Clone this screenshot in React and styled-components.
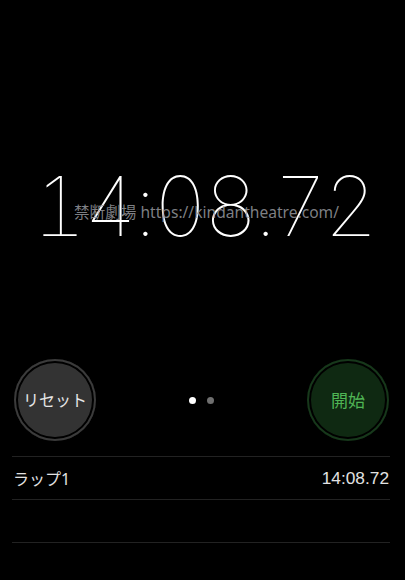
import React from "react";
import styled, { createGlobalStyle } from "styled-components";

const Global = createGlobalStyle`
  html, body {
    margin: 0;
    padding: 0;
    background: #000;
  }
  body {
    font-family: "Noto Sans", "Noto Sans CJK JP", sans-serif;
    color: #fff;
  }
`;

const Screen = styled.div`
  width: 405px;
  height: 580px;
  background: #000;
  display: flex;
  flex-direction: column;
  overflow: hidden;
`;

const Display = styled.div`
  position: relative;
  height: 359px;
  display: flex;
  align-items: center;
  justify-content: center;
  padding-top: 54px;
  padding-left: 3px;
  box-sizing: border-box;
`;

const Clock = styled.div`
  font-family: Inter, "Noto Sans", sans-serif;
  font-weight: 100;
  font-size: 83px;
  letter-spacing: -3px;
  font-variant-numeric: tabular-nums;
  color: #fff;
  line-height: 1;
`;

const Watermark = styled.div`
  position: absolute;
  left: 74px;
  top: 200px;
  font-family: "Noto Sans", "Noto Sans CJK JP", sans-serif;
  font-size: 15.6px;
  color: rgba(150, 152, 158, 0.85);
  white-space: nowrap;
  pointer-events: none;
`;

const Controls = styled.div`
  display: flex;
  align-items: center;
  justify-content: space-between;
  padding: 0 16px 0 14px;
  height: 82px;
`;

const RoundButton = styled.button`
  width: 82px;
  height: 82px;
  border-radius: 50%;
  border: none;
  padding: 0 0 2px;
  background: ${(p) => (p.$tone === "go" ? "#0f2912" : "#333")};
  box-shadow: inset 0 0 0 2px ${(p) => (p.$tone === "go" ? "#17381b" : "#3b3b3b")},
    inset 0 0 0 4px #000;
  color: ${(p) => (p.$tone === "go" ? "#4fb555" : "#e6e6e6")};
  font-family: "Noto Sans CJK JP", sans-serif;
  font-size: ${(p) => (p.$tone === "go" ? "17px" : "16px")};
  display: flex;
  align-items: center;
  justify-content: center;
  box-sizing: border-box;
`;

const Pager = styled.div`
  display: flex;
  gap: 11px;
  align-items: center;
`;

const Dot = styled.span`
  width: 7px;
  height: 7px;
  border-radius: 50%;
  background: ${(p) => (p.$active ? "#fff" : "#6f6f6f")};
`;

const Laps = styled.div`
  margin: 15px 15px 0 12px;
  border-top: 1px solid #222;
`;

const LapRow = styled.div`
  height: 42px;
  border-bottom: 1px solid #222;
  display: flex;
  align-items: center;
  justify-content: space-between;
  font-family: "Noto Sans", "Noto Sans CJK JP", sans-serif;
  font-size: 16px;
  color: #e2e2e2;
  padding: 0 1px;
`;

const LapTime = styled.span`
  font-family: "Liberation Sans", sans-serif;
  font-size: 17.3px;
`;

export default function App() {
  return (
    <Screen>
      <Global />
      <Display>
        <Clock>14:08.72</Clock>
        <Watermark>禁断劇場 https://kindantheatre.com/</Watermark>
      </Display>
      <Controls>
        <RoundButton>リセット</RoundButton>
        <Pager>
          <Dot $active />
          <Dot />
        </Pager>
        <RoundButton $tone="go">開始</RoundButton>
      </Controls>
      <Laps>
        <LapRow>
          <span>ラップ1</span>
          <LapTime>14:08.72</LapTime>
        </LapRow>
        <LapRow />
      </Laps>
    </Screen>
  );
}
